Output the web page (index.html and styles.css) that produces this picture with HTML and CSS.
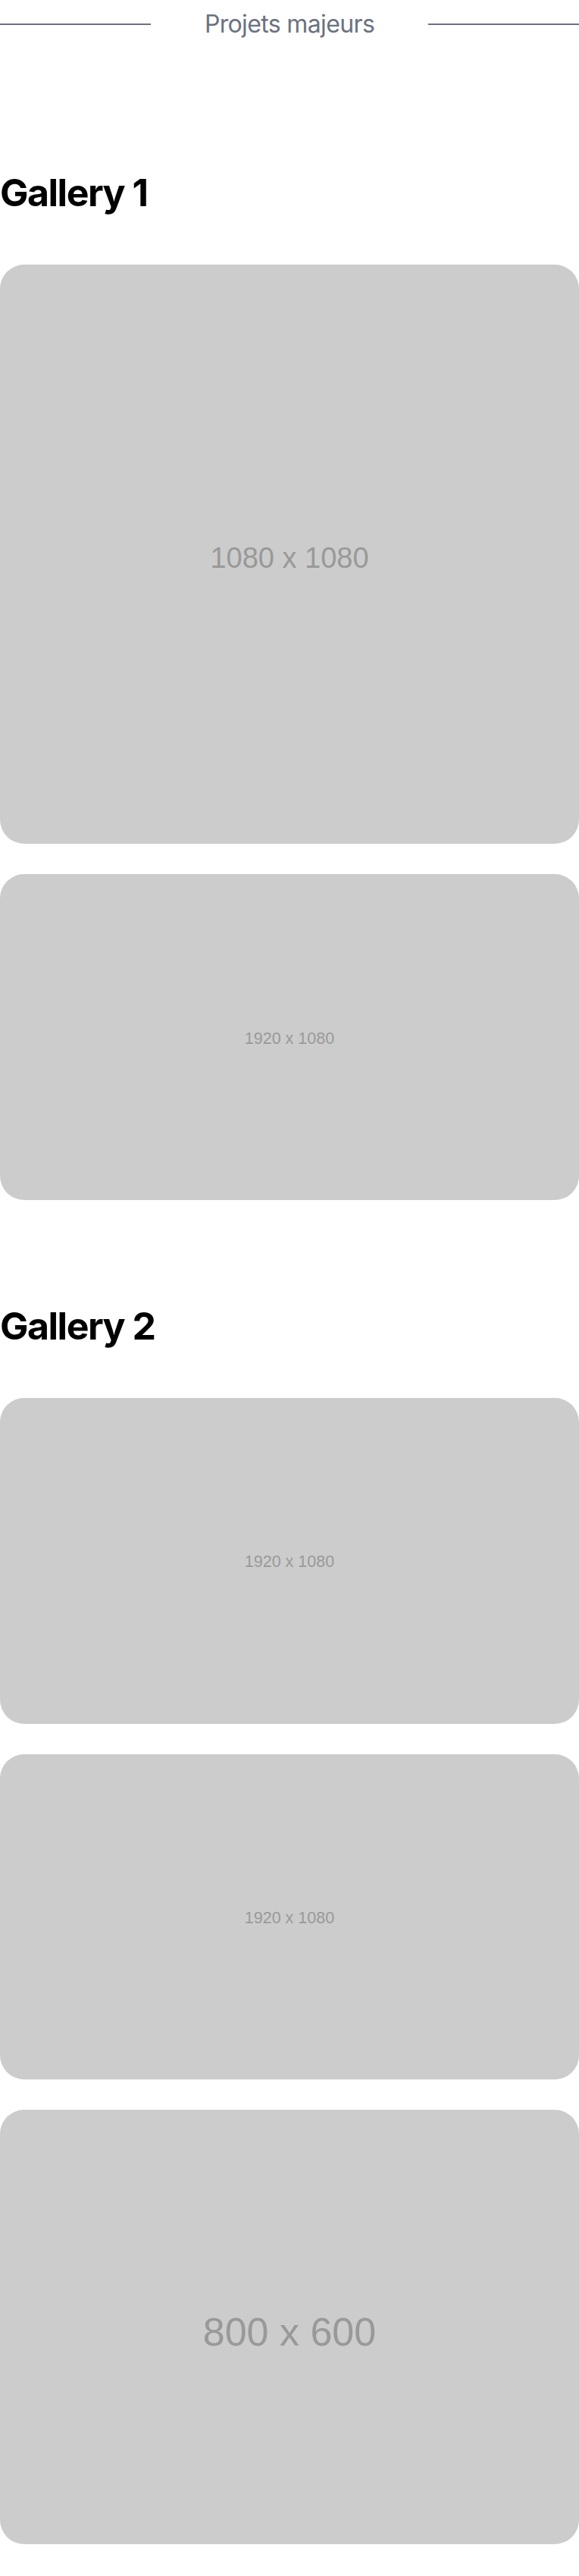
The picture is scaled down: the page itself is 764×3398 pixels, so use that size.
FILE: index.html
```html
<!DOCTYPE html>
<html lang="fr">
<head>
<meta charset="utf-8">
<title>Projets majeurs</title>
<link rel="stylesheet" href="styles.css">
</head>
<body>
<header class="divider">
  <span class="divider-line"></span>
  <span class="divider-title">Projets majeurs</span>
  <span class="divider-line"></span>
</header>

<section class="gallery">
  <h2 class="gallery-title">Gallery 1</h2>
  <div class="gallery-list">
    <div class="ph ph-1080"><span>1080 x 1080</span></div>
    <div class="ph ph-1920"><span>1920 x 1080</span></div>
  </div>
</section>

<section class="gallery">
  <h2 class="gallery-title">Gallery 2</h2>
  <div class="gallery-list">
    <div class="ph ph-1920"><span>1920 x 1080</span></div>
    <div class="ph ph-1920"><span>1920 x 1080</span></div>
    <div class="ph ph-800"><span>800 x 600</span></div>
  </div>
</section>
</body>
</html>
```

FILE: styles.css
```css
html, body {
  margin: 0;
  padding: 0;
  background: #ffffff;
}

body {
  font-family: Inter, "Noto Sans", sans-serif;
  color: #000;
}

.divider {
  display: flex;
  align-items: center;
  padding-top: 12px;
  margin-bottom: 36px;
}

.divider-line {
  flex: 1;
  height: 2px;
  background: #6b7280;
}

.divider-title {
  margin: 0 71px;
  font-size: 32px;
  line-height: 40px;
  font-weight: 400;
  color: #6b7280;
  letter-spacing: -0.02em;
  white-space: nowrap;
}

.gallery {
  padding-top: 135px;
}

.gallery-title {
  margin: 0 0 64px;
  font-size: 50px;
  line-height: 62px;
  font-weight: 700;
  letter-spacing: -0.03em;
}

.gallery-list {
  display: flex;
  flex-direction: column;
  gap: 40px;
}

.ph {
  display: flex;
  align-items: center;
  justify-content: center;
  background: #cccccc;
  border-radius: 32px;
  color: #999999;
  font-family: "Liberation Sans", Arial, sans-serif;
  line-height: 1;
}

.ph span {
  padding-top: 0.24em;
}

.ph-1080 {
  aspect-ratio: 1 / 1;
  font-size: 38px;
}

.ph-1920 {
  aspect-ratio: 1920 / 1080;
  font-size: 21.5px;
}

.ph-800 {
  aspect-ratio: 800 / 600;
  font-size: 52px;
}
```
